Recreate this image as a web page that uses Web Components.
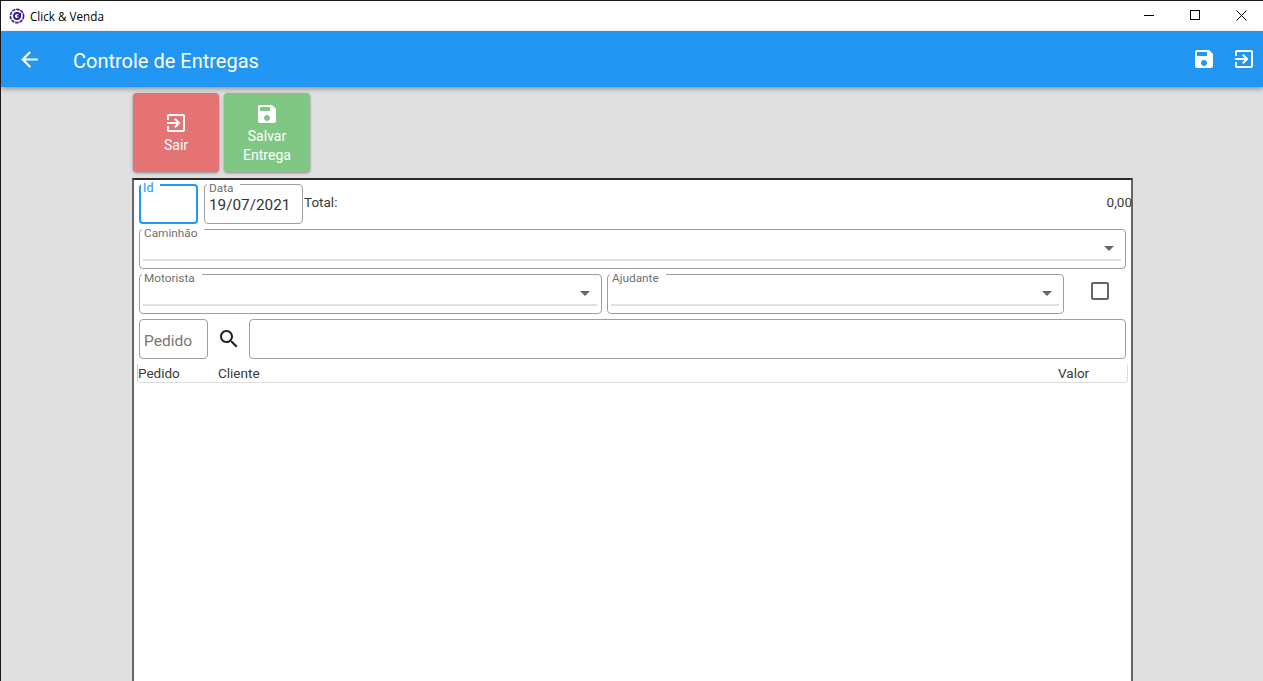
<!DOCTYPE html>
<html lang="pt">
<head>
<meta charset="utf-8">
<title>Click &amp; Venda</title>
<style>
    html, body { margin: 0; height: 100%; overflow: hidden; }
    body { font-family: Roboto, "Liberation Sans", sans-serif; background: #e0e0e0; }
    #janela { display: flex; flex-direction: column; height: 681px; box-sizing: border-box; border-top: 1px solid #1a1a1a; border-left: 1px solid #1a1a1a; }
</style>
</head>
<body>
<div id="janela">
    <barra-titulo>Click &amp; Venda</barra-titulo>
    <barra-app>Controle de Entregas</barra-app>
    <area-conteudo>
        <div slot="botoes" style="display:flex;gap:5px">
            <botao-acao cor="#e57373" icone="sair">Sair</botao-acao>
            <botao-acao cor="#81c784" icone="salvar">Salvar<br>Entrega</botao-acao>
        </div>
        <painel-entrega></painel-entrega>
    </area-conteudo>
</div>

<script>
const ICONES = {
    voltar: "M20 11H7.83l5.59-5.59L12 4l-8 8 8 8 1.41-1.41L7.83 13H20v-2z",
    salvar: "M17 3H5c-1.11 0-2 .9-2 2v14c0 1.1.89 2 2 2h14c1.1 0 2-.9 2-2V7l-4-4zm-5 16c-1.66 0-3-1.34-3-3s1.34-3 3-3 3 1.34 3 3-1.34 3-3 3zm3-10H5V5h10v4z",
    sair: "M10.09 15.59L11.5 17l5-5-5-5-1.41 1.41L12.67 11H3v2h9.67l-2.58 2.59zM19 3H5c-1.11 0-2 .9-2 2v4h2V5h14v14H5v-4H3v4c0 1.1.89 2 2 2h14c1.1 0 2-.9 2-2V5c0-1.1-.9-2-2-2z",
    busca: "M15.5 14h-.79l-.28-.27C15.41 12.59 16 11.11 16 9.5 16 5.91 13.09 3 9.5 3S3 5.91 3 9.5 5.91 16 9.5 16c1.61 0 3.09-.59 4.23-1.57l.27.28v.79l5 4.99L20.49 19l-4.99-5zm-6 0C7.01 14 5 11.99 5 9.5S7.01 5 9.5 5 14 7.01 14 9.5 11.99 14 9.5 14z",
    caixa: "M19 5v14H5V5h14m0-2H5c-1.1 0-2 .9-2 2v14c0 1.1.9 2 2 2h14c1.1 0 2-.9 2-2V5c0-1.11-.9-2-2-2z"
};

function icone(nome, tam) {
    return `<svg width="${tam}" height="${tam}" viewBox="0 0 24 24" fill="currentColor"><path d="${ICONES[nome]}"/></svg>`;
}

class BarraTitulo extends HTMLElement {
    constructor() {
        super();
        this.attachShadow({ mode: "open" });
        this.shadowRoot.innerHTML = `
            <style>
                :host { display: flex; align-items: center; height: 30px; background: #fff; color: #000; font: 11.7px "Open Sans", "Noto Sans", sans-serif; flex: none; }
                .logo { margin: -1px 5px 0 8px; display: block; }
                .titulo { flex: 1; }
                .ctrl { width: 46px; height: 30px; display: flex; align-items: center; justify-content: center; }
                .ctrl svg { display: block; margin-top: -2px; }
                .controles { display: flex; margin-right: -1px; }
            </style>
            <svg class="logo" width="16" height="16" viewBox="0 0 16 16" fill="none">
                <circle cx="8" cy="8" r="6.6" stroke="#4a148c" stroke-width="1.6" stroke-dasharray="3.5 .8"/>
                <circle cx="8" cy="8" r="3" stroke="#311b92" stroke-width="1.8"/>
                <path d="M8 8h3.4V5" stroke="#311b92" stroke-width="1.3"/>
            </svg>
            <span class="titulo"><slot></slot></span>
            <div class="controles">
                <div class="ctrl"><svg width="10" height="10" viewBox="0 0 10 10"><path d="M0 5.5h10" stroke="#000"/></svg></div>
                <div class="ctrl"><svg width="10" height="10" viewBox="0 0 10 10" fill="none"><rect x=".5" y=".5" width="9" height="9" stroke="#000"/></svg></div>
                <div class="ctrl"><svg width="11" height="11" viewBox="0 0 11 11"><path d="M.5.5l10 10M10.500.5l-10 10" stroke="#000"/></svg></div>
            </div>
        `;
    }
}
customElements.define("barra-titulo", BarraTitulo);

class BarraApp extends HTMLElement {
    constructor() {
        super();
        this.attachShadow({ mode: "open" });
        this.shadowRoot.innerHTML = `
            <style>
                :host { display: flex; align-items: center; height: 56px; flex: none; background: #2196f3; color: #fff; padding: 0 7px 0 16px; box-shadow: 0 2px 5px rgba(0,0,0,.35); position: relative; z-index: 1; }
                .titulo { flex: 1; margin-left: 31px; padding-top: 4px; font-size: 20px; }
                svg { display: block; }
                .acoes { display: flex; gap: 16px; }
            </style>
            ${icone("voltar", 25)}
            <div class="titulo"><slot></slot></div>
            <div class="acoes">${icone("salvar", 24)}${icone("sair", 24)}</div>
        `;
    }
}
customElements.define("barra-app", BarraApp);

class AreaConteudo extends HTMLElement {
    constructor() {
        super();
        this.attachShadow({ mode: "open" });
        this.shadowRoot.innerHTML = `
            <style>
                :host { display: flex; flex-direction: column; flex: 1; min-height: 0; padding: 6px 130px 0 131px; }
                .botoes { margin: 0 0 6px 1px; }
            </style>
            <div class="botoes"><slot name="botoes"></slot></div>
            <slot></slot>
        `;
    }
}
customElements.define("area-conteudo", AreaConteudo);

class BotaoAcao extends HTMLElement {
    constructor() {
        super();
        this.attachShadow({ mode: "open" });
        const cor = this.getAttribute("cor");
        this.shadowRoot.innerHTML = `
            <style>
                :host { display: flex; flex-direction: column; align-items: center; justify-content: center; width: 86px; height: 79px; box-sizing: border-box; padding-top: 1px; background: ${cor}; color: #fff; border-radius: 4px; box-shadow: 0 1px 3px rgba(0,0,0,.4); font-size: 14px; line-height: 19px; text-align: center; }
                svg { display: block; margin-bottom: 1px; }
            </style>
            ${icone(this.getAttribute("icone"), 24)}
            <div><slot></slot></div>
        `;
    }
}
customElements.define("botao-acao", BotaoAcao);

class CampoContorno extends HTMLElement {
    constructor() {
        super();
        this.attachShadow({ mode: "open" });
        const rotulo = this.getAttribute("rotulo");
        const foco = this.hasAttribute("foco");
        const lista = this.hasAttribute("lista");
        const dica = this.getAttribute("dica");
        this.shadowRoot.innerHTML = `
            <style>
                :host { display: block; box-sizing: border-box; height: 40px; position: relative; border: ${foco ? "2px solid #2196f3" : "1px solid #9e9e9e"}; border-radius: 4px; background: #fff; color: #333; font-size: 15.3px; }
                .rotulo { position: absolute; left: ${foco ? "0" : "2px"}; top: ${foco ? "-5px" : "-3px"}; padding: 0 7px 0 2px; background: #fff; font-size: ${foco ? "12.5px" : "11.8px"}; line-height: 13px; color: ${foco ? "#2196f3" : "#707070"}; }
                .valor { padding: 10px 0 0 4px; line-height: 20px; }
                .dica { padding: 11px 0 0 4px; line-height: 20px; font-size: 15.5px; color: #757575; }
                .linha { position: absolute; left: 3px; right: 4px; bottom: 7px; height: 2px; background: #e0e0e0; }
                .seta { position: absolute; right: 11px; top: 16px; width: 0; height: 0; border: 5px solid transparent; border-top: 5px solid #666; border-bottom: 0; }
            </style>
            ${rotulo ? `<div class="rotulo">${rotulo}</div>` : ""}
            ${dica ? `<div class="dica">${dica}</div>` : `<div class="valor"><slot></slot></div>`}
            ${lista ? `<div class="linha"></div><div class="seta"></div>` : ""}
        `;
    }
}
customElements.define("campo-contorno", CampoContorno);

class CabecalhoGrade extends HTMLElement {
    constructor() {
        super();
        this.attachShadow({ mode: "open" });
        this.shadowRoot.innerHTML = `
            <style>
                :host { display: grid; grid-template-columns: 80px 1fr 69px; height: 19px; box-sizing: border-box; margin: 0 3px 0 3px; border: 1px solid #ddd; border-top: 0; border-left-color: #ccc; border-radius: 0 0 4px 4px; font-size: 13.500px; line-height: 18px; color: #3a3a3a; }
            </style>
            <span>Pedido</span><span>Cliente</span><span>Valor</span>
        `;
    }
}
customElements.define("cabecalho-grade", CabecalhoGrade);

class PainelEntrega extends HTMLElement {
    constructor() {
        super();
        this.attachShadow({ mode: "open" });
        this.shadowRoot.innerHTML = `
            <style>
                :host { display: flex; flex-direction: column; flex: 1; min-height: 0; box-sizing: border-box; background: #fff; border: 2px solid #666; border-top-color: #2a2a2a; border-bottom: 0; padding-top: 4px; font-size: 13.500px; color: #3a3a3a; }
                .linha { display: flex; gap: 5px; margin: 0 5px 5px 5px; align-items: stretch; }
                .primeira { margin-right: -1px; gap: 6px; }
                .total { flex: 1; display: flex; justify-content: space-between; margin-left: -5px; padding-top: 9px; line-height: 18px; }
                .cresce { flex: 1; min-width: 0; }
                .dupla { display: grid; grid-template-columns: 463px 457px 1fr; }
                .marca { display: flex; align-items: center; justify-content: center; color: #666; }
                .marca svg { display: block; margin: -6px 0 0 5px; }
                .lupa { flex: none; width: 30px; display: flex; align-items: center; justify-content: center; color: #212121; }
                .lupa svg { display: block; margin-top: -1px; }
            </style>
            <div class="linha primeira">
                <campo-contorno rotulo="Id" foco style="width:59px"></campo-contorno>
                <campo-contorno rotulo="Data" style="width:99px">19/07/2021</campo-contorno>
                <div class="total"><span>Total:</span><span>0,00</span></div>
            </div>
            <div class="linha">
                <campo-contorno class="cresce" rotulo="Caminhão" lista></campo-contorno>
            </div>
            <div class="linha dupla">
                <campo-contorno rotulo="Motorista" lista></campo-contorno>
                <campo-contorno rotulo="Ajudante" lista></campo-contorno>
                <div class="marca">${icone("caixa", 24)}</div>
            </div>
            <div class="linha">
                <campo-contorno dica="Pedido" style="width:69px"></campo-contorno>
                <div class="lupa" style="width:31px">${icone("busca", 24)}</div>
                <campo-contorno class="cresce"></campo-contorno>
            </div>
            <cabecalho-grade></cabecalho-grade>
        `;
    }
}
customElements.define("painel-entrega", PainelEntrega);
</script>
</body>
</html>
